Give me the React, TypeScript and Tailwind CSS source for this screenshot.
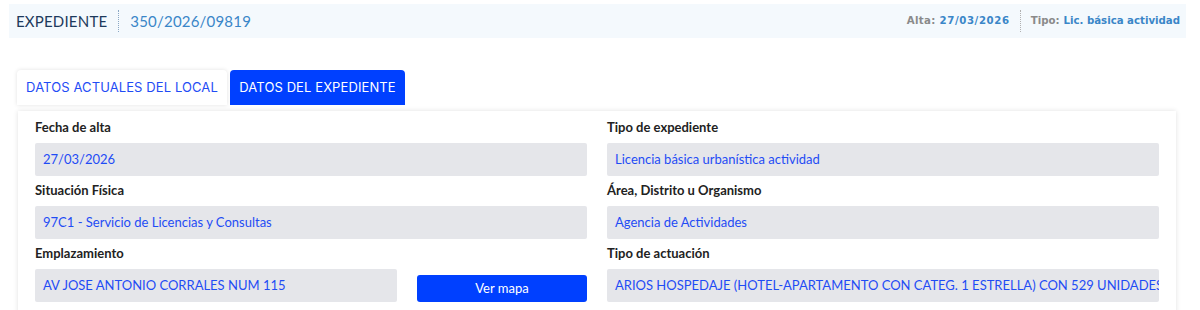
const FIELDS_LEFT = [
  { label: 'Fecha de alta', value: '27/03/2026' },
  { label: 'Situación Física', value: '97C1 - Servicio de Licencias y Consultas' },
];

const FIELDS_RIGHT = [
  { label: 'Tipo de expediente', value: 'Licencia básica urbanística actividad' },
  { label: 'Área, Distrito u Organismo', value: 'Agencia de Actividades' },
  {
    label: 'Tipo de actuación',
    value: 'ARIOS HOSPEDAJE (HOTEL-APARTAMENTO CON CATEG. 1 ESTRELLA) CON 529 UNIDADES DE ALOJAMIENTO',
  },
];

function Field({ label, value }: { label: string; value: string }) {
  return (
    <div className="flex flex-col">
      <div className="h-[30px] flex items-center text-[13px] font-bold text-[#222]">{label}</div>
      <div className="h-[33px] flex items-center px-2 bg-[#e5e6ea] rounded-[2px] text-[13px] text-[#1f4cf5] whitespace-nowrap overflow-hidden">
        {value}
      </div>
    </div>
  );
}

export default function App() {
  return (
    <div className="w-[1200px] h-[310px] bg-white overflow-hidden" style={{ fontFamily: 'Lato, "Liberation Sans", sans-serif' }}>
      {/* Cabecera */}
      <div className="pt-1 px-[9px] pr-[14px]">
        <div className="h-[34px] bg-[#f4f9fd] flex items-center justify-between pl-[7px] pr-[6px]">
          <div className="flex items-center">
            <span className="text-[15px] text-[#1d3a5c] tracking-[0.2px]">EXPEDIENTE</span>
            <span className="mx-[11px] h-[22px] border-l border-dotted border-[#8aa7c4]" />
            <span className="text-[15px] text-[#3a86c8] tracking-[0.2px]">350/2026/09819</span>
          </div>
          <div className="flex items-center text-[10.2px] font-bold" style={{ fontFamily: '"DejaVu Sans", Verdana, sans-serif' }}>
            <span className="text-[#8a8a8a] tracking-[0.3px]">Alta:</span>
            <span className="ml-1 text-[#3a86c8] tracking-[0.6px]">27/03/2026</span>
            <span className="mx-[10px] h-[22px] border-l border-dotted border-[#b0b0b0]" />
            <span className="text-[#8a8a8a]">Tipo:</span>
            <span className="ml-1 text-[#3a86c8]">Lic. básica actividad</span>
          </div>
        </div>
      </div>

      {/* Pestañas */}
      <div className="mt-[32px] ml-[17px] flex items-end gap-[3px]" style={{ fontFamily: 'Inter, "Noto Sans", sans-serif' }}>
        <div className="h-[35px] w-[210px] flex items-center justify-center bg-white rounded-t-[4px] shadow-[0_0_4px_rgba(0,0,0,0.12)] text-[13px] tracking-[0.1px] text-[#1f4cf5]">
          DATOS ACTUALES DEL LOCAL
        </div>
        <div className="h-[35px] w-[175px] flex items-center justify-center bg-[#0040ff] rounded-t-[4px] text-[13px] tracking-[0.1px] text-white">
          DATOS DEL EXPEDIENTE
        </div>
      </div>

      {/* Tarjeta */}
      <div className="mt-[6px] ml-[18px] w-[1158px] h-[220px] bg-white shadow-[0_0_5px_rgba(0,0,0,0.12)] px-[17px] pt-[2px]">
        <div className="grid grid-cols-2 gap-x-[20px]">
          <div className="flex flex-col">
            {FIELDS_LEFT.map((f) => (
              <Field key={f.label} {...f} />
            ))}
            <div className="flex flex-col">
              <div className="h-[30px] flex items-center text-[13px] font-bold text-[#222]">Emplazamiento</div>
              <div className="flex items-end gap-[20px]">
                <div className="w-[362px] h-[33px] flex items-center px-2 bg-[#e5e6ea] rounded-[2px] text-[13px] text-[#1f4cf5] whitespace-nowrap overflow-hidden">
                  AV JOSE ANTONIO CORRALES NUM 115
                </div>
                <button className="flex-1 h-[27px] bg-[#0040ff] rounded-[3px] text-white text-[13px]">
                  Ver mapa
                </button>
              </div>
            </div>
          </div>
          <div className="flex flex-col">
            {FIELDS_RIGHT.map((f) => (
              <Field key={f.label} {...f} />
            ))}
          </div>
        </div>
      </div>
    </div>
  );
}
